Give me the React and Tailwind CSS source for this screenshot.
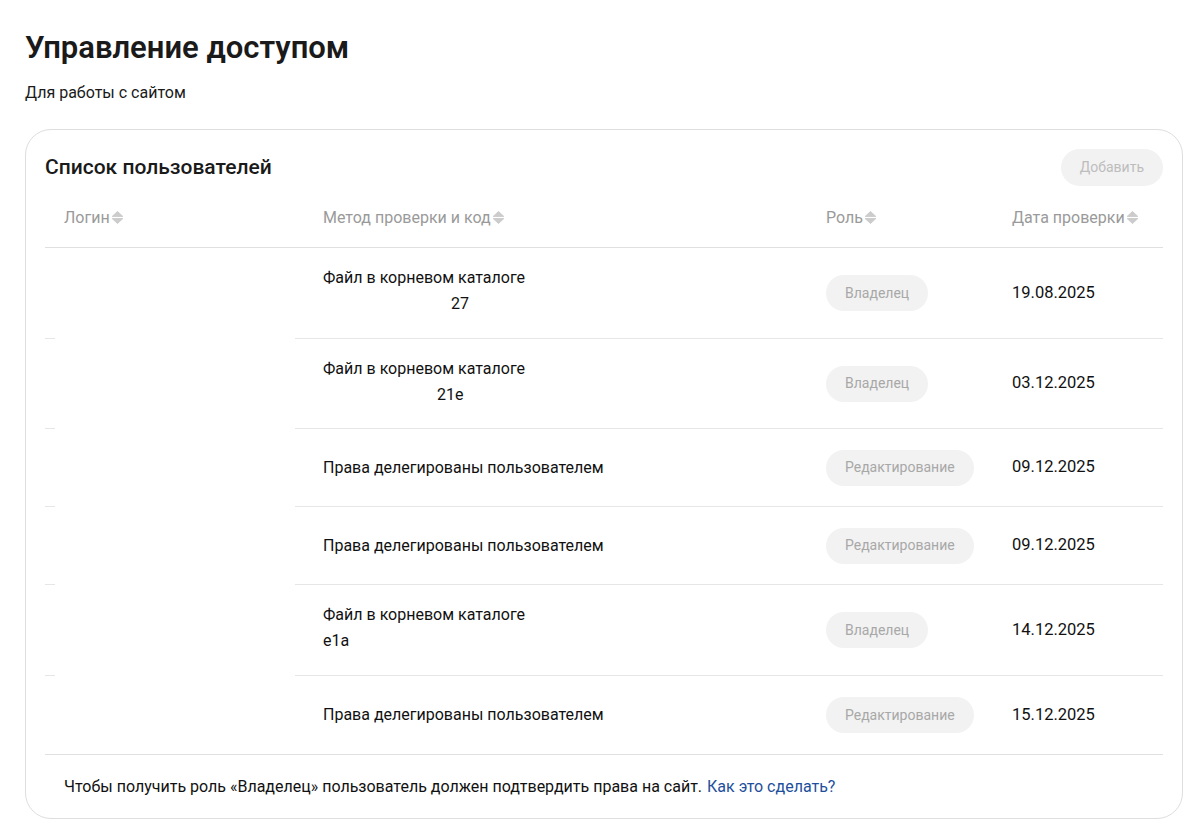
const FONT = { fontFamily: "Roboto, 'Noto Sans', sans-serif" };

const rows = [
  { method: "Файл в корневом каталоге", code: "27", codeClass: "pl-[128px]", role: "Владелец", date: "19.08.2025", h: "h-[91px]", line: true },
  { method: "Файл в корневом каталоге", code: "21e", codeClass: "pl-[114px]", role: "Владелец", date: "03.12.2025", h: "h-[90px]", line: true },
  { method: "Права делегированы пользователем", role: "Редактирование", date: "09.12.2025", h: "h-[78px]", line: true },
  { method: "Права делегированы пользователем", role: "Редактирование", date: "09.12.2025", h: "h-[78px]", line: true },
  { method: "Файл в корневом каталоге", code: "e1a", codeClass: "", role: "Владелец", date: "14.12.2025", h: "h-[91px]", line: true },
  { method: "Права делегированы пользователем", role: "Редактирование", date: "15.12.2025", h: "h-[78px]", line: false },
];

function SortIcon() {
  return (
    <svg width="13" height="15" viewBox="0 0 13 15" className="ml-[1px] inline-block">
      <path d="M6.5 1.5 L11.8 6.4 H1.2 Z" fill="#cccccc" strokeLinejoin="round" stroke="#cccccc" strokeWidth="1" />
      <path d="M1.2 8.6 H11.8 L6.5 13.5 Z" fill="#cccccc" strokeLinejoin="round" stroke="#cccccc" strokeWidth="1" />
    </svg>
  );
}

function HeadCell({ children, className }) {
  return (
    <div className={`flex items-center text-[16px] text-[#9a9a9a] ${className}`}>
      {children}
      <SortIcon />
    </div>
  );
}

function Row({ row }) {
  const border = row.line ? "border-b border-[#e6e6e6]" : "";
  return (
    <div className={`flex ${row.h}`}>
      <div className="flex w-[250px] flex-col justify-end">
        {row.line && <div className="h-px w-[10px] bg-[#e6e6e6]" />}
      </div>
      <div className={`flex flex-1 items-center ${border}`}>
        <div className="flex w-[531px] flex-col justify-center pl-[28px] text-[16px] leading-[26px] text-[#111]">
          {row.code ? (
            <>
              <div className="-mt-[4px]">{row.method}</div>
              <div className={row.codeClass}>{row.code}</div>
            </>
          ) : (
            <div>{row.method}</div>
          )}
        </div>
        <div className="w-[186px]">
          <span className="inline-flex h-[36px] items-center rounded-full bg-[#f2f2f2] px-[19px] text-[14px] text-[#a8a8a8]">
            {row.role}
          </span>
        </div>
        <div className="flex-1 text-[16.5px] text-[#111]">{row.date}</div>
      </div>
    </div>
  );
}

export default function App() {
  return (
    <div className="min-h-screen bg-white pb-4 pl-[25px] pr-[17px] pt-[29px]" style={FONT}>
      <h1 className="text-[31px] font-semibold leading-[38px] text-[#1a1a1a]">Управление доступом</h1>
      <p className="mt-[16px] text-[16px] leading-[20px] text-[#1a1a1a]">Для работы с сайтом</p>

      <div className="mt-[26px] rounded-[26px] border border-[#dedede] px-[19px] pt-[19px]">
        <div className="flex h-[37px] items-center justify-between">
          <h2 className="text-[21px] font-medium text-[#1a1a1a]">Список пользователей</h2>
          <button className="h-[37px] rounded-full bg-[#f2f2f2] px-[19px] text-[14px] text-[#bdbdbd]">Добавить</button>
        </div>

        <div className="flex h-[62px] items-center border-b border-[#e0e0e0] pt-[2px]">
          <HeadCell className="w-[250px] pl-[19px]">Логин</HeadCell>
          <HeadCell className="w-[531px] pl-[28px]">Метод проверки и код</HeadCell>
          <HeadCell className="w-[186px]">Роль</HeadCell>
          <HeadCell className="flex-1">Дата проверки</HeadCell>
        </div>

        {rows.map((row, i) => (
          <Row key={i} row={row} />
        ))}

        <div className="flex h-[64px] items-center border-t border-[#e0e0e0] pl-[19px] text-[16px] text-[#111]">
          Чтобы получить роль «Владелец» пользователь должен подтвердить права на сайт.
          <a href="#" className="ml-[5px] text-[#1d4f9c]">Как это сделать?</a>
        </div>
      </div>
    </div>
  );
}
